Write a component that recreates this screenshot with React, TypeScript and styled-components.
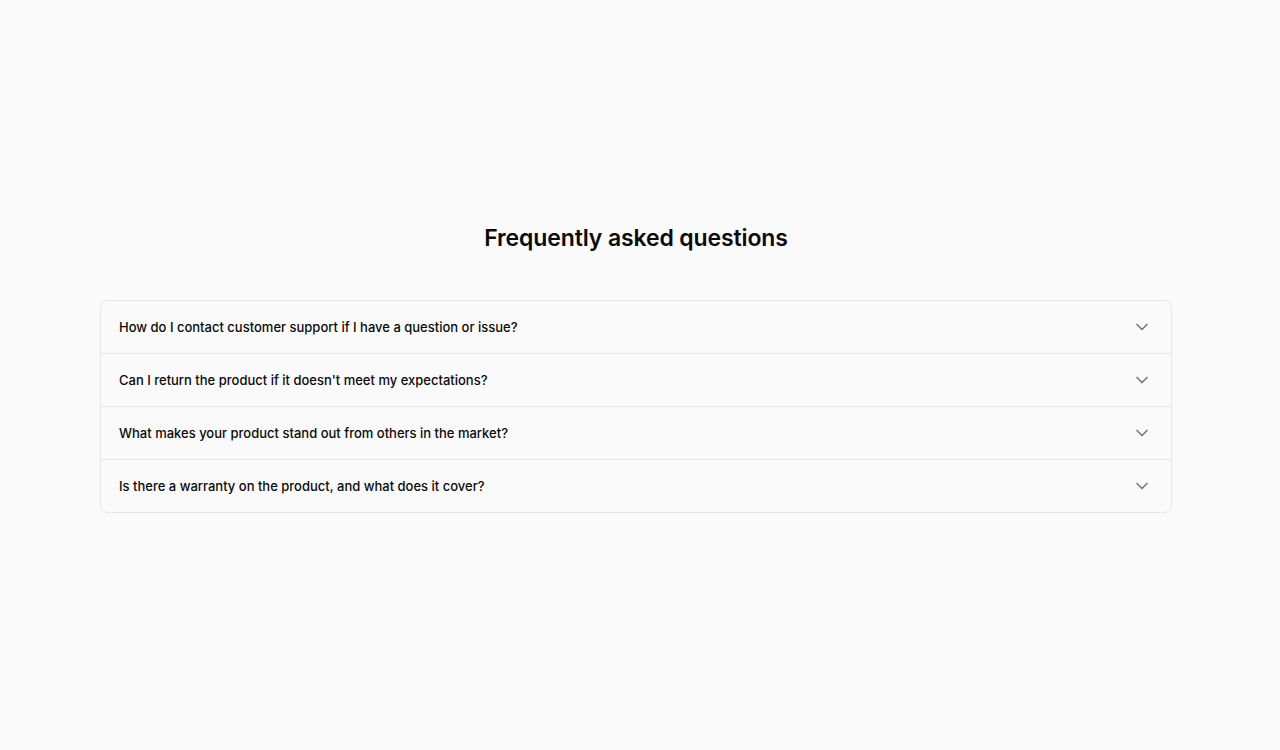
import React from "react";
import styled, { createGlobalStyle } from "styled-components";

const Global = createGlobalStyle`
  html, body { margin: 0; padding: 0; background: #fafafa; }
  body { font-family: Inter, "Noto Sans", sans-serif; color: #0a0a0a; -webkit-font-smoothing: antialiased; }
`;

const Page = styled.main`
  min-height: 750px;
  box-sizing: border-box;
  padding: 222px 108px 0 100px;
  display: flex;
  flex-direction: column;
  align-items: center;
`;

const Title = styled.h2`
  margin: 0 0 46px 0;
  font-size: 23px;
  line-height: 32px;
  font-weight: 600;
  letter-spacing: -0.12px;
  color: #0a0a0a;
`;

const Card = styled.div`
  width: 100%;
  box-sizing: border-box;
  border: 1px solid #e6e6e6;
  border-radius: 8px;
  background: #fafafa;
  overflow: hidden;
`;

const Row = styled.button<{ $last?: boolean }>`
  all: unset;
  box-sizing: border-box;
  width: 100%;
  height: ${(p) => (p.$last ? 52 : 53)}px;
  display: flex;
  align-items: center;
  justify-content: space-between;
  padding: 0 19px 1px 18px;
  border-bottom: ${(p) => (p.$last ? "none" : "1px solid #e6e6e6")};
  cursor: pointer;
`;

const Question = styled.span`
  font-size: 13px;
  font-weight: 500;
  line-height: 20px;
  color: #0a0a0a;
`;

const Chevron = () => (
  <svg width="20" height="20" viewBox="0 0 24 24" fill="none" stroke="#7a7a7a" strokeWidth="2" strokeLinecap="round" strokeLinejoin="round">
    <path d="m6 9 6 6 6-6" />
  </svg>
);

const questions = [
  "How do I contact customer support if I have a question or issue?",
  "Can I return the product if it doesn't meet my expectations?",
  "What makes your product stand out from others in the market?",
  "Is there a warranty on the product, and what does it cover?",
];

export default function App() {
  return (
    <>
      <Global />
      <Page>
        <Title>Frequently asked questions</Title>
        <Card>
          {questions.map((q, i) => (
            <Row key={q} $last={i === questions.length - 1}>
              <Question>{q}</Question>
              <Chevron />
            </Row>
          ))}
        </Card>
      </Page>
    </>
  );
}
